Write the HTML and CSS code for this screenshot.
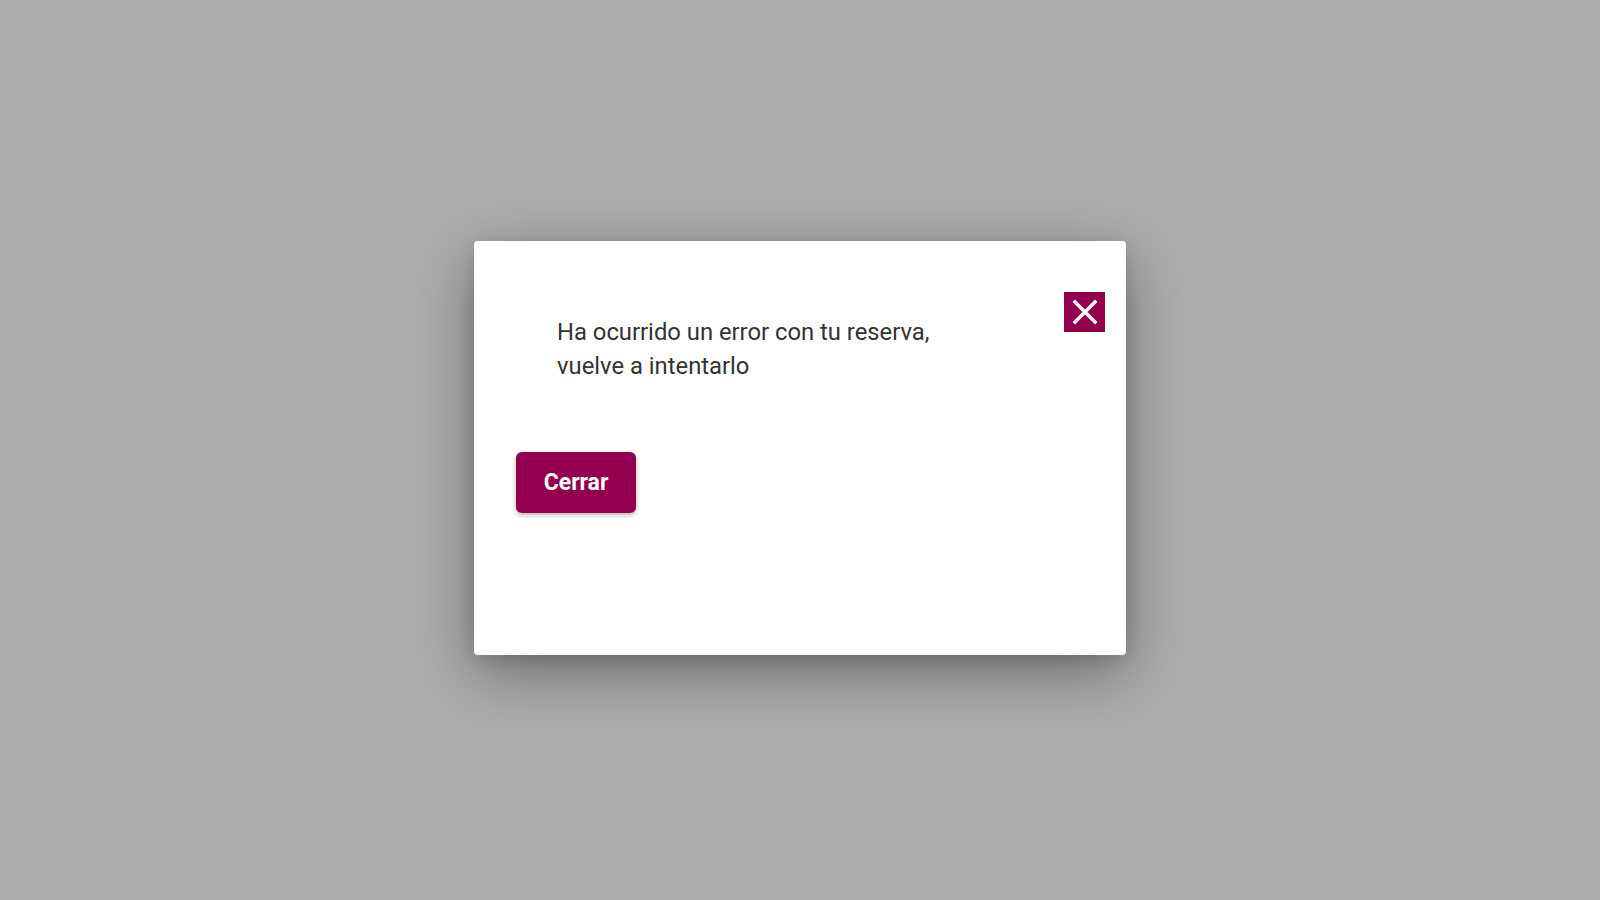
FILE: index.html
```html
<!DOCTYPE html>
<html lang="es">
<head>
<meta charset="utf-8">
<title>Error</title>
<link rel="stylesheet" href="styles.css">
</head>
<body>
<div class="overlay">
  <div class="modal" role="dialog">
    <div class="modal-head">
      <p class="message">Ha ocurrido un error con tu reserva,<br>vuelve a intentarlo</p>
      <button class="close" aria-label="Cerrar">
        <svg viewBox="0 0 40 40" width="40" height="40" aria-hidden="true">
          <path d="M10 10 L30 30 M30 10 L10 30" stroke="#fff" stroke-width="3.4" stroke-linecap="square" fill="none"/>
        </svg>
      </button>
    </div>
    <button class="primary">Cerrar</button>
  </div>
</div>
</body>
</html>
```

FILE: styles.css
```css
html, body {
  margin: 0;
  height: 100%;
}
body {
  background: #adadad;
  font-family: Roboto, "Liberation Sans", sans-serif;
}
.overlay {
  height: 100vh;
  display: flex;
  align-items: center;
  justify-content: center;
}
.modal {
  box-sizing: border-box;
  width: 652px;
  height: 414px;
  margin-top: -4px;
  background: #fff;
  border-radius: 4px;
  padding: 51px 21px 0 42px;
  box-shadow: 0 18px 60px rgba(0, 0, 0, 0.38), 0 4px 16px rgba(0, 0, 0, 0.12);
}
.modal-head {
  display: flex;
  justify-content: space-between;
  align-items: flex-start;
}
.message {
  margin: 23px 0 0 41px;
  font-size: 23.8px;
  line-height: 34px;
  color: #333;
  font-weight: 400;
}
.close {
  width: 41px;
  height: 40px;
  padding: 0;
  border: none;
  background: #92004f;
  display: flex;
  align-items: center;
  justify-content: center;
  cursor: pointer;
}
.close svg {
  display: block;
}
.primary {
  display: block;
  margin-top: 69px;
  width: 120px;
  height: 61px;
  border: none;
  border-radius: 6px;
  background: #92004f;
  color: #fff;
  font-family: Roboto, "Liberation Sans", sans-serif;
  font-size: 23px;
  font-weight: 700;
  padding-bottom: 2px;
  box-shadow: 0 2px 5px rgba(0, 0, 0, 0.3);
  cursor: pointer;
}
```
